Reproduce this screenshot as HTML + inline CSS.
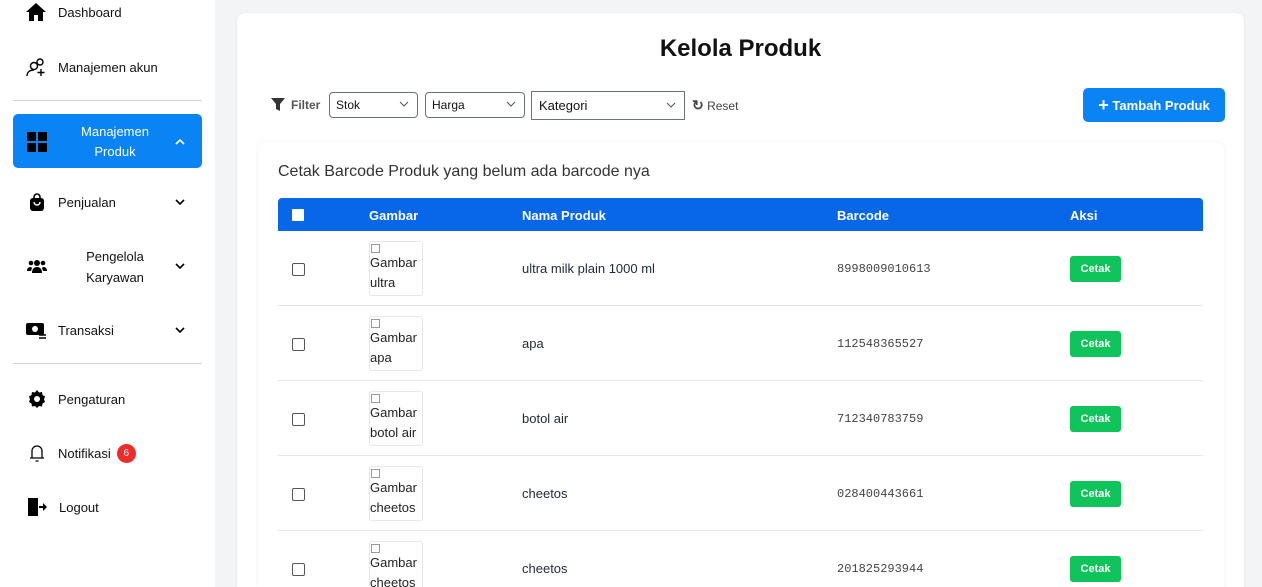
<!DOCTYPE html>
<html style="overflow:hidden;height:587px"><head><meta charset="utf-8"><style>
*{box-sizing:border-box;margin:0;padding:0}
body{width:1262px;height:587px;overflow:hidden;background:#f3f4f6;font-family:"Liberation Sans",sans-serif;color:#1f2937;position:relative}
.side{position:absolute;left:0;top:0;width:215px;height:587px;background:#fff}
.it{position:absolute;left:26px;font-size:13px;color:#111;display:flex;align-items:center}
.it svg{margin-right:12px}
.hr{position:absolute;left:13px;width:189px;height:1px;background:#d1d5db}
.chev{position:absolute;left:174px;width:12px;height:12px}
.main{position:absolute;left:237px;top:13px;width:1007px;height:574px;background:#fff;border-radius:8px 8px 0 0;box-shadow:0 1px 3px rgba(0,0,0,.08)}
.abs{position:absolute}
.sel{position:absolute;top:92px;height:26px;border:1px solid #6b7280;border-radius:4px;font-size:12px;padding:5px 6px;color:#111}
.sel svg{position:absolute;right:8px;top:8px}
.inner{position:absolute;left:258px;top:142px;width:966px;height:445px;background:#fff;border-radius:8px 8px 0 0;box-shadow:0 0 4px rgba(0,0,0,.06)}
.th{position:absolute;left:278px;top:198px;width:925px;height:33px;background:#0866e8;border-radius:4px 4px 0 0;color:#fff;font-weight:bold;font-size:13px}
.th span{position:absolute;top:10px}
.row{position:absolute;left:278px;width:925px;height:75px;border-bottom:1px solid #e5e7eb;font-size:13px}
.cb{position:absolute;left:14px;top:32px;width:13px;height:13px;border:1px solid #555;border-radius:2px;background:#fff}
.img{position:absolute;left:91px;top:10px;width:54px;height:55px;border:1px solid #e5e7eb;border-radius:3px;font-size:13px;line-height:19.5px;overflow:hidden;color:#222}
.img i{display:block;width:9px;height:9px;border:1px solid #999;margin:2px 0 0 1px}
.nm{position:absolute;left:244px;top:30px}
.bc{position:absolute;left:559px;top:31px;font-family:"Liberation Mono",monospace;font-size:12px;color:#444}
.bt{position:absolute;left:792px;top:25px;width:51px;height:26px;background:#10c45c;color:#fff;border-radius:3px;font-size:11px;font-weight:bold;text-align:center;line-height:26px}
</style></head><body>
<div class="side">
<div class="it" style="top:3px"><svg width="20" height="18" viewBox="0 0 20 18"><path d="M10 0L0 9h3v9h5v-6h4v6h5V9h3z" fill="#000"/></svg>Dashboard</div>
<div class="it" style="top:57px"><svg width="20" height="20" viewBox="0 0 20 20" fill="none" stroke="#000" stroke-width="1.4"><circle cx="8" cy="9" r="3.5"/><path d="M1 19c0-4 3-6 7-6"/><circle cx="14" cy="5" r="3"/><path d="M15 12v7M11.5 15.5h7"/></svg>Manajemen akun</div>
<div class="hr" style="top:100px"></div>
<div class="abs" style="left:13px;top:114px;width:189px;height:54px;background:#0a84f5;border-radius:5px"></div>
<svg class="abs" style="left:27px;top:132px" width="20" height="20"><rect x="0" y="0" width="9" height="9" fill="#000"/><rect x="11" y="0" width="9" height="9" fill="#000"/><rect x="0" y="11" width="9" height="9" fill="#000"/><rect x="11" y="11" width="9" height="9" fill="#000"/></svg>
<div class="abs" style="left:70px;top:122px;width:90px;text-align:center;color:#fff;font-size:13px;line-height:20px">Manajemen<br>Produk</div>
<svg class="chev" style="top:136px" viewBox="0 0 12 12"><path d="M2 8l4-4 4 4" stroke="#fff" stroke-width="1.6" fill="none"/></svg>
<div class="it" style="top:193px;left:28px"><svg width="18" height="18" viewBox="0 0 18 18"><path d="M6 5V4a3 3 0 016 0v1" stroke="#000" stroke-width="1.6" fill="none"/><rect x="2" y="5" width="14" height="13" rx="3" fill="#000"/><path d="M6 9a3 3 0 006 0" stroke="#fff" stroke-width="1.4" fill="none"/></svg>Penjualan</div>
<svg class="chev" style="top:196px" viewBox="0 0 12 12"><path d="M2 4l4 4 4-4" stroke="#000" stroke-width="1.6" fill="none"/></svg>
<svg class="abs" style="left:27px;top:258px" width="20" height="16" viewBox="0 0 20 16" fill="#000"><circle cx="10" cy="5" r="3"/><circle cx="4" cy="5" r="2.3"/><circle cx="16" cy="5" r="2.3"/><path d="M5 15c0-4 2-6 5-6s5 2 5 6zM0 13c0-3 1.5-4 4-4l1 1-1 3zM20 13c0-3-1.5-4-4-4l-1 1 1 3z"/></svg>
<div class="abs" style="left:70px;top:246px;width:90px;text-align:center;font-size:13px;line-height:21px;color:#111">Pengelola<br>Karyawan</div>
<svg class="chev" style="top:260px" viewBox="0 0 12 12"><path d="M2 4l4 4 4-4" stroke="#000" stroke-width="1.6" fill="none"/></svg>
<div class="it" style="top:321px"><svg width="20" height="18" viewBox="0 0 20 18"><rect x="0" y="2" width="18" height="12" rx="2" fill="#000"/><circle cx="9" cy="8" r="3" fill="#fff"/><path d="M13 14h7M13 17h7" stroke="#000" stroke-width="1.4"/></svg>Transaksi</div>
<svg class="chev" style="top:324px" viewBox="0 0 12 12"><path d="M2 4l4 4 4-4" stroke="#000" stroke-width="1.6" fill="none"/></svg>
<div class="hr" style="top:363px"></div>
<div class="it" style="top:390px;left:28px"><svg width="18" height="18" viewBox="0 0 18 18"><path d="M9 0l2 2.5 3-.5.5 3L17 6.5 16 9.5 17 12l-2.5 1.5-.5 3-3-.5L9 18l-2-2-3 .5-.5-3L1 12l1-2.5L1 6.5 3.5 5 4 2l3 .5z" fill="#000"/><circle cx="9" cy="9" r="3" fill="#fff"/></svg>Pengaturan</div>
<div class="it" style="top:443px;left:28px"><svg width="18" height="20" viewBox="0 0 18 20" fill="none" stroke="#000" stroke-width="1.3"><path d="M4 15V8a5 5 0 0110 0v7zM2 15h14M7.5 18h3"/></svg>Notifikasi<span style="display:inline-block;margin-left:6px;width:19px;height:19px;border-radius:50%;background:#ef2a2a;color:#fff;font-size:10px;text-align:center;line-height:19px">6</span></div>
<div class="it" style="top:497px;left:27px"><svg width="20" height="20" viewBox="0 0 20 20" fill="#000"><path d="M1 1h10v18H1z"/><path d="M12 9h4V6l4 4-4 4v-3h-4z"/></svg>Logout</div>
</div>
<div class="main"></div>
<div class="abs" style="left:237px;top:35px;width:1007px;text-align:center;font-size:24px;font-weight:bold;color:#111">Kelola Produk</div>
<svg class="abs" style="left:271px;top:98px" width="14" height="13" viewBox="0 0 14 13"><path d="M0 0h14L9 6v7L5 11V6z" fill="#333"/></svg>
<div class="abs" style="left:291px;top:98px;font-size:12px;color:#555;font-weight:bold">Filter</div>
<div class="sel" style="left:329px;width:89px">Stok<svg width="10" height="6"><path d="M1 1l4 4 4-4" stroke="#555" fill="none"/></svg></div>
<div class="sel" style="left:425px;width:100px">Harga<svg width="10" height="6"><path d="M1 1l4 4 4-4" stroke="#555" fill="none"/></svg></div>
<div class="sel" style="left:531px;width:154px;height:29px;top:91px;border-radius:0;font-size:13px;padding:6px 7px">Kategori<svg width="10" height="6" style="top:10px"><path d="M1 1l4 4 4-4" stroke="#555" fill="none"/></svg></div>
<div class="abs" style="left:692px;top:97px;font-size:12px;color:#444"><b style="font-size:14px">↻</b> Reset</div>
<div class="abs" style="left:1083px;top:88px;width:142px;height:34px;background:#0a84f5;border-radius:5px;color:#fff;font-weight:bold;font-size:13px;text-align:center;line-height:34px"><span style="font-size:18px;vertical-align:-1px">+</span> Tambah Produk</div>
<div class="inner"></div>
<div class="abs" style="left:278px;top:163px;font-size:16px;color:#333">Cetak Barcode Produk yang belum ada barcode nya</div>
<div class="th"><div style="position:absolute;left:14px;top:11px;width:12px;height:12px;background:#fff;border-radius:1px"></div><span style="left:91px">Gambar</span><span style="left:244px">Nama Produk</span><span style="left:559px">Barcode</span><span style="left:792px">Aksi</span></div>
<div class="row" style="top:231px"><div class="cb"></div><div class="img"><i></i>Gambar<br>ultra</div><div class="nm">ultra milk plain 1000 ml</div><div class="bc">8998009010613</div><div class="bt">Cetak</div></div>
<div class="row" style="top:306px"><div class="cb"></div><div class="img"><i></i>Gambar<br>apa</div><div class="nm">apa</div><div class="bc">112548365527</div><div class="bt">Cetak</div></div>
<div class="row" style="top:381px"><div class="cb"></div><div class="img"><i></i>Gambar<br>botol air</div><div class="nm">botol air</div><div class="bc">712340783759</div><div class="bt">Cetak</div></div>
<div class="row" style="top:456px"><div class="cb"></div><div class="img"><i></i>Gambar<br>cheetos</div><div class="nm">cheetos</div><div class="bc">028400443661</div><div class="bt">Cetak</div></div>
<div class="row" style="top:531px;height:56px;border-bottom:0"><div class="cb"></div><div class="img"><i></i>Gambar<br>cheetos</div><div class="nm">cheetos</div><div class="bc">201825293944</div><div class="bt">Cetak</div></div>
</body></html>
